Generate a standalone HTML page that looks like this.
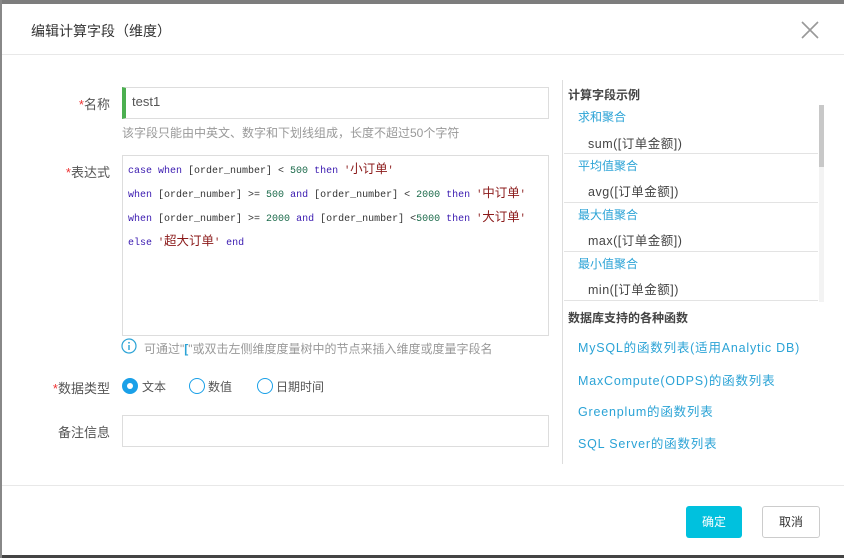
<!DOCTYPE html>
<html><head><meta charset="utf-8"><style>
*{margin:0;padding:0;box-sizing:border-box}
body{width:844px;height:558px;overflow:hidden;background:#fff;font-family:"Liberation Sans","Noto Sans CJK SC",sans-serif;position:relative;color:#333}
.a{position:absolute}
.top{left:0;top:0;width:844px;height:4px;background:#7d7d7d}
.bot{left:0;top:555px;width:844px;height:3px;background:#444}
.lft{left:0;top:0;width:2px;height:558px;background:#888}
.lbl{font-size:13px;color:#555;text-align:right;width:110px;left:0}
.star{color:#e33}
.inp{border:1px solid #ddd;background:#fff}
.code{font-family:"Liberation Mono","Noto Sans CJK SC",monospace;font-size:10px;white-space:normal;color:#333}
.code div{height:24px;line-height:24px;white-space:pre}
.k{color:#3a1ab0}.n{color:#1b6a4a}.s{color:#8b1a1a}
.s i{font-style:normal;font-size:12.5px;line-height:1;font-family:"Noto Sans CJK SC",sans-serif}
.rt{font-size:12px;font-weight:bold;color:#444}
.bl{color:#2ba3d6;font-size:12px}
.ex{font-size:12.5px;color:#444;letter-spacing:.5px}
.sep{height:1px;background:#e3e3e3;left:564px;width:254px}
.lk{color:#2ba3d6;font-size:12.5px;letter-spacing:.8px;left:578px}
.radio{width:16px;height:16px;border:1px solid #1aa0e8;border-radius:50%;background:#fff}
</style></head><body>
<div class="a top"></div><div class="a bot"></div><div class="a lft"></div>
<div class="a" style="left:31px;top:21px;font-size:14px;color:#333">编辑计算字段（维度）</div>
<svg class="a" style="left:800px;top:20px" width="20" height="20"><path d="M2 2L18 18M18 2L2 18" stroke="#999" stroke-width="1.6"/></svg>
<div class="a" style="left:2px;top:54px;width:842px;height:1px;background:#e8e8e8"></div>

<div class="a lbl" style="top:94px"><span class="star">*</span>名称</div>
<div class="a inp" style="left:122px;top:87px;width:427px;height:32px;border-left:4px solid #4caf50"></div>
<div class="a" style="left:132px;top:94px;font-size:13px;color:#555">test1</div>
<div class="a" style="left:122px;top:124px;font-size:12px;color:#999">该字段只能由中英文、数字和下划线组成，长度不超过50个字符</div>

<div class="a lbl" style="top:162px"><span class="star">*</span>表达式</div>
<div class="a inp" style="left:122px;top:155px;width:427px;height:181px"></div>
<div class="a code" style="left:128px;top:160px"><div><span class="k">case when</span> [order_number] &lt; <span class="n">500</span> <span class="k">then</span> <span class="s">'<i>小订单</i>'</span></div><div><span class="k">when</span> [order_number] &gt;= <span class="n">500</span> <span class="k">and</span> [order_number] &lt; <span class="n">2000</span> <span class="k">then</span> <span class="s">'<i>中订单</i>'</span></div><div><span class="k">when</span> [order_number] &gt;= <span class="n">2000</span> <span class="k">and</span> [order_number] &lt;<span class="n">5000</span> <span class="k">then</span> <span class="s">'<i>大订单</i>'</span></div><div><span class="k">else</span> <span class="s">'<i>超大订单</i>'</span> <span class="k">end</span></div></div>

<svg class="a" style="left:121px;top:338px" width="16" height="16"><circle cx="8" cy="8" r="7" fill="none" stroke="#2ba3d6" stroke-width="1.2"/><rect x="7.3" y="7" width="1.4" height="5" fill="#2ba3d6"/><circle cx="8" cy="4.8" r=".9" fill="#2ba3d6"/></svg>
<div class="a" style="left:144px;top:340px;font-size:12px;color:#999">可通过"<b style="color:#2ba3d6">[</b>"或双击左侧维度度量树中的节点来插入维度或度量字段名</div>

<div class="a lbl" style="top:378px"><span class="star">*</span>数据类型</div>
<div class="a radio" style="left:122px;top:378px;background:#1aa0e8"></div><div class="a" style="left:127px;top:383px;width:6px;height:6px;border-radius:50%;background:#fff"></div>
<div class="a" style="left:142px;top:378px;font-size:12px;color:#555">文本</div>
<div class="a radio" style="left:189px;top:378px"></div>
<div class="a" style="left:208px;top:378px;font-size:12px;color:#555">数值</div>
<div class="a radio" style="left:257px;top:378px"></div>
<div class="a" style="left:276px;top:378px;font-size:12px;color:#555">日期时间</div>

<div class="a lbl" style="top:422px">备注信息</div>
<div class="a inp" style="left:122px;top:415px;width:427px;height:32px"></div>

<div class="a" style="left:562px;top:80px;width:1px;height:384px;background:#ddd"></div>
<div class="a rt" style="left:568px;top:86px">计算字段示例</div>
<div class="a" style="left:819px;top:105px;width:5px;height:197px;background:#f3f3f3"></div>
<div class="a" style="left:819px;top:105px;width:5px;height:62px;background:#c8c8c8"></div>
<div class="a bl" style="left:578px;top:108px">求和聚合</div><div class="a ex" style="left:588px;top:133px">sum([订单金额])</div><div class="a sep" style="top:153px"></div>
<div class="a bl" style="left:578px;top:157px">平均值聚合</div><div class="a ex" style="left:588px;top:181px">avg([订单金额])</div><div class="a sep" style="top:202px"></div>
<div class="a bl" style="left:578px;top:206px">最大值聚合</div><div class="a ex" style="left:588px;top:230px">max([订单金额])</div><div class="a sep" style="top:251px"></div>
<div class="a bl" style="left:578px;top:255px">最小值聚合</div><div class="a ex" style="left:588px;top:279px">min([订单金额])</div><div class="a sep" style="top:300px"></div>
<div class="a rt" style="left:568px;top:309px">数据库支持的各种函数</div>
<div class="a lk" style="top:337px">MySQL的函数列表(适用Analytic DB)</div>
<div class="a lk" style="top:370px">MaxCompute(ODPS)的函数列表</div>
<div class="a lk" style="top:401px">Greenplum的函数列表</div>
<div class="a lk" style="top:433px">SQL Server的函数列表</div>

<div class="a" style="left:2px;top:485px;width:842px;height:1px;background:#e8e8e8"></div>
<div class="a" style="left:686px;top:506px;width:56px;height:32px;background:#00c1de;border-radius:3px;color:#fff;font-size:12px;text-align:center;line-height:32px">确定</div>
<div class="a" style="left:762px;top:506px;width:58px;height:32px;border:1px solid #ccc;border-radius:3px;color:#333;font-size:12px;text-align:center;line-height:30px">取消</div>
</body></html>
